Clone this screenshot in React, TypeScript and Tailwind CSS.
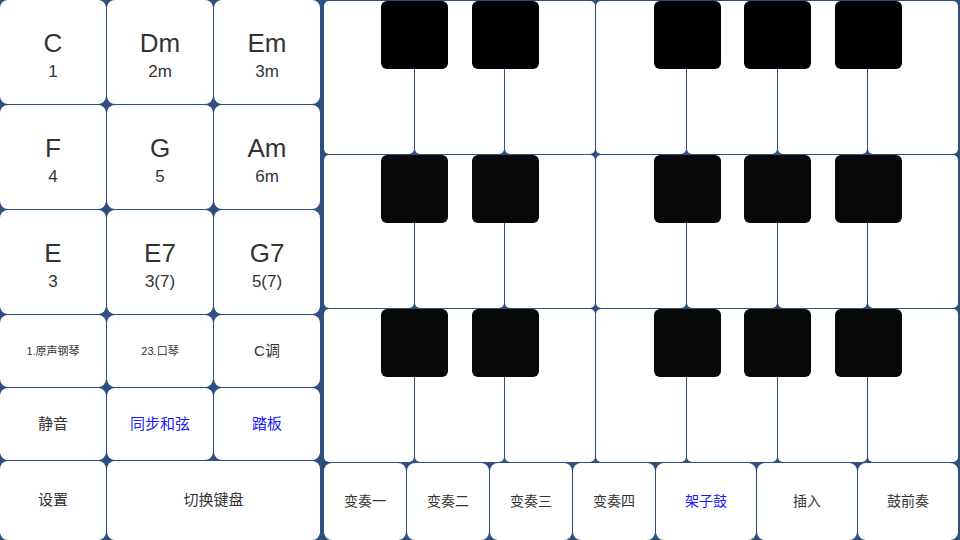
import React from "react";

const font = { fontFamily: '"Liberation Sans", Arial, "Noto Sans CJK SC", sans-serif' };

function Chord({ name, num }: { name: string; num: string }) {
  return (
    <div className="bg-white rounded-[8px] flex flex-col items-center justify-center text-[#333] pt-[6px]">
      <div className="text-[26px] leading-[30px]">{name}</div>
      <div className="text-[17px] leading-[22px] mt-[3px]">{num}</div>
    </div>
  );
}

function Btn({ label, cls = "", blue = false }: { label: string; cls?: string; blue?: boolean }) {
  return (
    <div
      className={`bg-white rounded-[8px] flex items-center justify-center ${blue ? "text-[#1a1aff]" : "text-[#333]"} ${cls}`}
    >
      {label}
    </div>
  );
}

function KeyRow({ black }: { black: string }) {
  const blacks = ["left-[57px]", "left-[148px]", "left-[330px]", "left-[420px]", "left-[511px]"];
  return (
    <div className="relative h-[153px] flex gap-px">
      {Array.from({ length: 7 }).map((_, i) => (
        <div key={i} className="flex-1 bg-white rounded-[5px]" />
      ))}
      {blacks.map((b, i) => (
        <div key={i} className={`absolute top-0 ${b} w-[67px] h-[68px] rounded-[6px] ${black}`} />
      ))}
    </div>
  );
}

export default function App() {
  return (
    <div className="w-[960px] h-[540px] bg-[#2f4f7d] flex overflow-hidden" style={font}>
      <div className="w-[320px] h-full grid grid-cols-3 grid-rows-[104px_104px_104px_72px_72px_1fr] gap-px">
        <Chord name="C" num="1" />
        <Chord name="Dm" num="2m" />
        <Chord name="Em" num="3m" />
        <Chord name="F" num="4" />
        <Chord name="G" num="5" />
        <Chord name="Am" num="6m" />
        <Chord name="E" num="3" />
        <Chord name="E7" num="3(7)" />
        <Chord name="G7" num="5(7)" />
        <Btn label="1.原声钢琴" cls="text-[11px]" />
        <Btn label="23.口琴" cls="text-[11px]" />
        <Btn label="C调" cls="text-[15px]" />
        <Btn label="静音" cls="text-[15px]" />
        <Btn label="同步和弦" cls="text-[15px]" blue />
        <Btn label="踏板" cls="text-[15px]" blue />
        <Btn label="设置" cls="text-[15px]" />
        <Btn label="切换键盘" cls="text-[15px] col-span-2" />
      </div>
      <div className="ml-[4px] w-[634px] h-full flex flex-col gap-px pt-px">
        <KeyRow black="bg-black" />
        <KeyRow black="bg-[#080808]" />
        <KeyRow black="bg-[#080808]" />
        <div className="flex-1 flex gap-px">
          <Btn label="变奏一" cls="w-[82px] text-[14px]" />
          <Btn label="变奏二" cls="w-[82px] text-[14px]" />
          <Btn label="变奏三" cls="w-[82px] text-[14px]" />
          <Btn label="变奏四" cls="w-[82px] text-[14px]" />
          <Btn label="架子鼓" cls="w-[100px] text-[14px]" blue />
          <Btn label="插入" cls="w-[100px] text-[14px]" />
          <Btn label="鼓前奏" cls="w-[100px] text-[14px]" />
        </div>
      </div>
    </div>
  );
}
